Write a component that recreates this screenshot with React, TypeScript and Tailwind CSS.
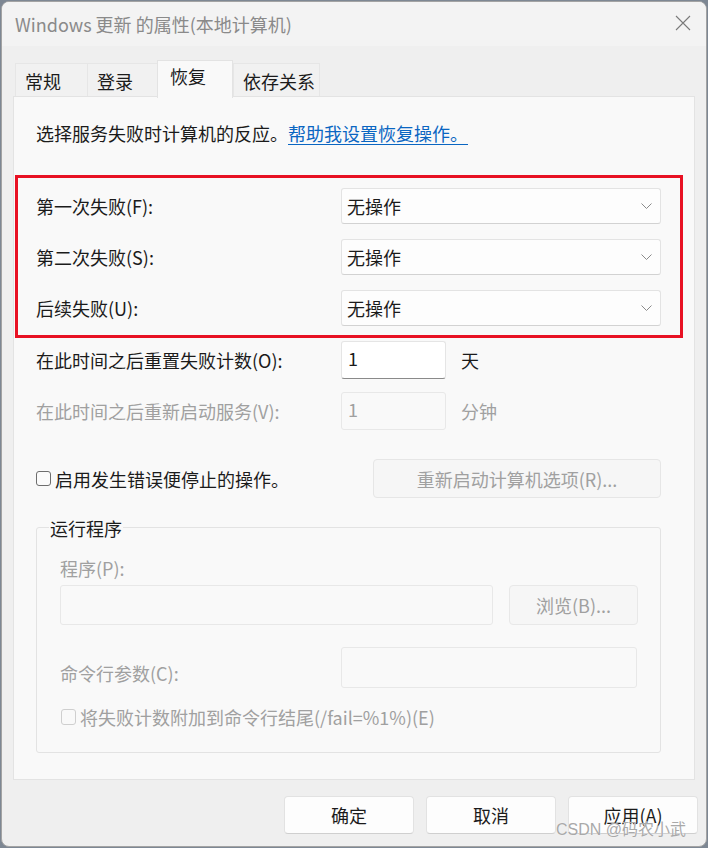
import React from 'react';

const font = { fontFamily: '"Noto Sans CJK SC", "Noto Sans", sans-serif' };

function Chevron() {
  return (
    <svg width="11" height="7" viewBox="0 0 11 7" className="shrink-0">
      <polyline points="0.5,0.5 5.5,5.5 10.5,0.5" fill="none" stroke="#8a8a8a" strokeWidth="1" />
    </svg>
  );
}

function Select({ value }: { value: string }) {
  return (
    <div className="flex h-[36px] w-[320px] items-center justify-between rounded-[3px] border border-[#e3e3e3] border-b-[#d2d2d2] bg-[#fdfdfd] pl-[5px] pr-[8px] text-[#1b1b1b]">
      <span>{value}</span>
      <Chevron />
    </div>
  );
}

const tabs = [
  { label: '常规', w: 'w-[72px]', active: false },
  { label: '登录', w: 'w-[70px]', active: false },
  { label: '恢复', w: 'w-[76px]', active: true },
  { label: '依存关系', w: 'w-[87px]', active: false },
];

const failures = ['第一次失败(F):', '第二次失败(S):', '后续失败(U):'];

export default function App() {
  return (
    <div className="relative h-[848px] w-[708px] overflow-hidden bg-[#7d8793] text-[18px] leading-[24px]" style={font}>
      <div className="ml-[1px] mt-[1px] flex h-[846px] w-[706px] flex-col overflow-hidden rounded-[8px] border border-[#a3a3a3] bg-[#efefef]">
        {/* title bar */}
        <div className="flex h-[44px] shrink-0 items-center justify-between bg-[#f3f3f3] pl-[13px] pr-[15px]">
          <span className="text-[#8a8a8a]">Windows 更新 的属性(本地计算机)</span>
          <svg width="16" height="16" viewBox="0 0 16 16" className="mb-[2px]">
            <path d="M1 1 L15 15 M15 1 L1 15" stroke="#7a7a7a" strokeWidth="1.1" />
          </svg>
        </div>

        {/* tabs */}
        <div className="ml-[13px] mt-[14px] flex h-[37px] items-end">
          {tabs.map((t) =>
            t.active ? (
              <div key={t.label} className={`relative z-10 ${t.w} h-[38px] translate-y-[1px] border border-b-0 border-[#e3e3e3] bg-[#f9f9f9] pl-[12px] pt-[3px] text-[#1b1b1b]`}>
                {t.label}
              </div>
            ) : (
              <div key={t.label} className={`${t.w} h-[34px] border border-r-0 border-[#e6e6e6] bg-[#f1f1f1] pl-[9px] pt-[5px] text-[#1b1b1b] last:border-r`}>
                {t.label}
              </div>
            )
          )}
        </div>

        {/* panel */}
        <div className="ml-[11px] mt-[-1px] flex h-[684px] w-[682px] shrink-0 flex-col border border-[#e3e3e3] bg-[#f9f9f9] pl-[22px] pr-[33px]">
          <div className="mt-[24px] h-[24px] text-[#1b1b1b]">
            选择服务失败时计算机的反应。<span className="text-[#0a66c2] underline underline-offset-[3px]">帮助我设置恢复操作。</span>
          </div>

          <div className="mt-[43px] flex flex-col gap-[15px]">
            {failures.map((f) => (
              <div key={f} className="flex items-center">
                <span className="w-[305px] text-[#1b1b1b]">{f}</span>
                <Select value="无操作" />
              </div>
            ))}
          </div>

          <div className="mt-[15px] flex h-[38px] items-center">
            <span className="w-[305px] text-[#1b1b1b]">在此时间之后重置失败计数(O):</span>
            <div className="h-[38px] w-[105px] rounded-[3px] border border-[#e5e5e5] border-b-[#8a8a8a] bg-white pl-[6px] pt-[4px] text-[#1b1b1b]">1</div>
            <span className="ml-[15px] text-[#1b1b1b]">天</span>
          </div>

          <div className="mt-[13px] flex h-[38px] items-center">
            <span className="w-[305px] text-[#a0a0a0]">在此时间之后重新启动服务(V):</span>
            <div className="h-[38px] w-[105px] rounded-[3px] border border-[#e8e8e8] bg-[#f9f9f9] pl-[6px] pt-[4px] text-[#a0a0a0]">1</div>
            <span className="ml-[15px] text-[#a0a0a0]">分钟</span>
          </div>

          <div className="mt-[29px] flex h-[39px] items-center justify-between">
            <label className="flex items-center gap-[4px] text-[#1b1b1b]">
              <span className="h-[15px] w-[15px] rounded-[3px] border border-[#6e6e6e] bg-[#fbfbfb]" />
              启用发生错误便停止的操作。
            </label>
            <div className="flex h-[39px] w-[288px] items-center justify-center rounded-[4px] border border-[#e6e6e6] bg-[#f6f6f6] text-[#a0a0a0]">
              重新启动计算机选项(R)...
            </div>
          </div>

          {/* group box */}
          <div className="relative mt-[29px] h-[226px] rounded-[3px] border border-[#e3e3e3] pl-[23px] pr-[22px]">
            <span className="absolute left-[12px] top-[-12px] bg-[#f9f9f9] px-[1px] text-[#1b1b1b]">运行程序</span>
            <div className="mt-[28px] h-[24px] text-[#a0a0a0]">程序(P):</div>
            <div className="mt-[5px] flex gap-[16px]">
              <div className="h-[40px] w-[433px] rounded-[3px] border border-[#e8e8e8] bg-[#f9f9f9]" />
              <div className="flex h-[40px] w-[129px] items-center justify-center rounded-[4px] border border-[#e8e8e8] bg-[#f6f6f6] text-[#a0a0a0]">
                浏览(B)...
              </div>
            </div>
            <div className="mt-[22px] flex h-[41px] items-center">
              <span className="w-[281px] pt-[10px] text-[#a0a0a0]">命令行参数(C):</span>
              <div className="h-[41px] w-[296px] rounded-[3px] border border-[#e8e8e8] bg-[#f9f9f9]" />
            </div>
            <label className="mt-[17px] flex h-[24px] items-center gap-[4px] text-[#a0a0a0]">
              <span className="ml-[1px] h-[16px] w-[15px] rounded-[3px] border border-[#cfcfcf] bg-[#f9f9f9]" />
              将失败计数附加到命令行结尾(/fail=%1%)(E)
            </label>
          </div>
        </div>

        {/* footer buttons */}
        <div className="mt-[16px] flex justify-end gap-[12px] pr-[8px]">
          {['确定', '取消', '应用(A)'].map((b) => (
            <div key={b} className="flex h-[38px] w-[130px] items-center justify-center rounded-[4px] border border-[#e2e2e2] border-b-[#cfcfcf] bg-[#fdfdfd] text-[#1b1b1b]">
              {b}
            </div>
          ))}
        </div>
      </div>

      {/* annotation boxes */}
      <div className="absolute left-[168px] top-[61px] h-[37px] w-[50px] border-[3px] border-[#e81123]" />
      <div className="absolute left-[15px] top-[175px] h-[163px] w-[668px] border-[3px] border-[#e81123]" />

      {/* watermark */}
      <div className="absolute left-[556px] top-[818px] text-[16px] leading-[24px] text-[#a9a9a9]" style={{ fontFamily: '"Liberation Sans", "Noto Sans CJK SC", sans-serif', textShadow: '0 0 1px #fff' }}>
        CSDN @码农小武
      </div>
    </div>
  );
}
